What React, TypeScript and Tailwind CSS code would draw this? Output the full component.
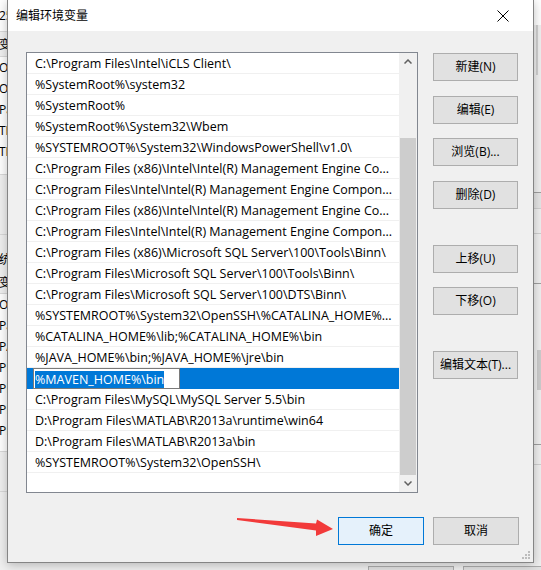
import React from 'react';

const paths = [
  'C:\\Program Files\\Intel\\iCLS Client\\',
  '%SystemRoot%\\system32',
  '%SystemRoot%',
  '%SystemRoot%\\System32\\Wbem',
  '%SYSTEMROOT%\\System32\\WindowsPowerShell\\v1.0\\',
  'C:\\Program Files (x86)\\Intel\\Intel(R) Management Engine Co...',
  'C:\\Program Files\\Intel\\Intel(R) Management Engine Compon...',
  'C:\\Program Files (x86)\\Intel\\Intel(R) Management Engine Co...',
  'C:\\Program Files\\Intel\\Intel(R) Management Engine Compon...',
  'C:\\Program Files (x86)\\Microsoft SQL Server\\100\\Tools\\Binn\\',
  'C:\\Program Files\\Microsoft SQL Server\\100\\Tools\\Binn\\',
  'C:\\Program Files\\Microsoft SQL Server\\100\\DTS\\Binn\\',
  '%SYSTEMROOT%\\System32\\OpenSSH\\%CATALINA_HOME%...',
  '%CATALINA_HOME%\\lib;%CATALINA_HOME%\\bin',
  '%JAVA_HOME%\\bin;%JAVA_HOME%\\jre\\bin',
  '%MAVEN_HOME%\\bin',
  'C:\\Program Files\\MySQL\\MySQL Server 5.5\\bin',
  'D:\\Program Files\\MATLAB\\R2013a\\runtime\\win64',
  'D:\\Program Files\\MATLAB\\R2013a\\bin',
  '%SYSTEMROOT%\\System32\\OpenSSH\\',
  '',
];

const SELECTED = 15;

const font = { fontFamily: '"Open Sans", "Noto Sans CJK SC", sans-serif' };

// 按钮
const Btn = ({ label, primary, className = '' }: { label: string; primary?: boolean; className?: string }) => (
  <div
    className={`h-[28px] flex items-center justify-center border text-[12px] text-black ${
      primary ? 'bg-[#e5f1fb] border-[#0078d7]' : 'bg-[#e1e1e1] border-[#adadad]'
    } ${className}`}
  >
    {label}
  </div>
);

const LeftStrip = () => {
  // 背景窗口露出的左边缘
  const top = ['O', 'O', 'Pa', 'TE', 'TM'];
  const bottom = ['O', 'Pa', 'PA', 'PR', 'PR', 'PR', 'PR'];
  return (
    <div className="w-[7px] h-full flex flex-col overflow-hidden text-[12px] leading-[21px] text-black">
      <div className="h-[32px] bg-white border-b border-[#d9d9d9] flex items-center -ml-[1px]">25</div>
      <div className="h-[24px] flex items-center -ml-[1px]">变</div>
      <div className="bg-white border-y border-[#d9d9d9] pb-[12px]">
        {top.map((t, i) => (
          <div key={i} className="h-[21px] -ml-[1px] whitespace-nowrap">{t}</div>
        ))}
      </div>
      <div className="h-[60px] border-b border-[#d9d9d9]" />
      <div className="h-[24px] mt-[12px] flex items-center -ml-[1px]">统</div>
      <div className="h-[22px] flex items-center -ml-[1px]">变</div>
      <div className="bg-white border-y border-[#d9d9d9] pb-[10px]">
        {bottom.map((t, i) => (
          <div key={i} className="h-[21px] -ml-[1px] whitespace-nowrap">{t}</div>
        ))}
      </div>
      <div className="h-[40px] border-b border-[#d9d9d9]" />
    </div>
  );
};

const RightStrip = () => (
  <div className="w-[7px] h-full flex flex-col overflow-hidden">
    <div className="h-[25px] bg-white" />
    <div className="h-[50px] ml-[2px] w-[2px] bg-[#d0d0d0]" />
    <div className="h-[118px] border-b border-[#a0a0a0]" />
    <div className="h-[16px] bg-[#e6e6e6] border-b border-[#d0d0d0]" />
    <div className="h-[25px] border-b border-[#d0d0d0]" />
    <div className="h-[50px] border-b border-[#a0a0a0]" />
    <div className="h-[66px]" />
    <div className="h-[40px] ml-[3px] bg-[#cdcdcd]" />
    <div className="h-[55px] border-b border-[#a0a0a0]" />
    <div className="h-[20px] border-b border-[#d0d0d0]" />
  </div>
);

export default function App() {
  return (
    <div className="relative w-[541px] h-[570px] overflow-hidden bg-[#f0f0f0]" style={font}>
      <div className="flex h-full">
        <LeftStrip />
        <div className="w-[527px]" />
        <RightStrip />
      </div>

      {/* 背景窗口的按钮边缘 */}
      <div className="absolute left-[368px] top-[566px] w-[86px] h-[28px] bg-[#e1e1e1] border border-[#adadad]" />
      <div className="absolute left-[463px] top-[566px] w-[86px] h-[28px] bg-[#e1e1e1] border border-[#adadad]" />

      {/* 对话框 */}
      <div className="absolute left-[7px] top-0 w-[527px] h-[563px] bg-[#f0f0f0] border-x border-b border-[#858585] shadow-[0_2px_10px_rgba(0,0,0,0.25)] flex flex-col">
        <div className="h-[31px] bg-white flex items-center justify-between shrink-0">
          <span className="pl-[8px] text-[12px] text-black">编辑环境变量</span>
          <svg width="12" height="12" viewBox="0 0 12 12" className="mr-[24px]">
            <path d="M0.5 0.5 L11.5 11.5 M11.5 0.5 L0.5 11.5" stroke="#000" strokeWidth="1" />
          </svg>
        </div>

        <div className="flex pt-[21px] pl-[18px]">
          {/* 列表 */}
          <div className="w-[392px] h-[441px] border border-[#828790] bg-white flex">
            <div className="w-[372px] flex flex-col overflow-hidden">
              {paths.map((p, i) =>
                i === SELECTED ? (
                  <div key={i} className="h-[21px] shrink-0 bg-[#0078d7] flex items-stretch pl-[6px]">
                    <div className="w-[147px] bg-white border border-[#7a7a7a] flex items-center pl-[1px] pt-[2px]">
                      <span className="bg-[#0078d7] text-white text-[12.5px] leading-[17px] whitespace-nowrap">{p}</span>
                    </div>
                  </div>
                ) : (
                  <div
                    key={i}
                    className="h-[21px] shrink-0 border-b border-[#f0f0f0] flex items-center pl-[8px] pt-[3px] text-[12.5px] text-black whitespace-nowrap overflow-hidden"
                  >
                    {p}
                  </div>
                ),
              )}
            </div>
            {/* 滚动条 */}
            <div className="w-[18px] bg-[#f0f0f0] flex flex-col">
              <div className="h-[17px] flex items-center justify-center">
                <svg width="8" height="5" viewBox="0 0 8 5">
                  <path d="M0.5 4.5 L4 1 L7.5 4.5" fill="none" stroke="#606060" strokeWidth="1.5" />
                </svg>
              </div>
              <div className="h-[68px]" />
              <div className="h-[337px] mx-[1px] bg-[#cdcdcd]" />
              <div className="flex-1 flex items-center justify-center">
                <svg width="8" height="5" viewBox="0 0 8 5">
                  <path d="M0.5 0.5 L4 4 L7.5 0.5" fill="none" stroke="#606060" strokeWidth="1.5" />
                </svg>
              </div>
            </div>
          </div>

          {/* 右侧按钮 */}
          <div className="ml-[15px] w-[85px] flex flex-col pt-[1px]">
            <Btn label="新建(N)" />
            <Btn label="编辑(E)" className="mt-[15px]" />
            <Btn label="浏览(B)..." className="mt-[14px]" />
            <Btn label="删除(D)" className="mt-[15px]" />
            <Btn label="上移(U)" className="mt-[36px]" />
            <Btn label="下移(O)" className="mt-[14px]" />
            <Btn label="编辑文本(T)..." className="mt-[36px]" />
          </div>
        </div>

        <div className="flex justify-end pr-[14px] pt-[24px] gap-[9px]">
          <Btn label="确定" primary className="w-[86px]" />
          <Btn label="取消" className="w-[86px]" />
        </div>

        {/* 调整大小手柄 */}
        <svg width="9" height="9" viewBox="0 0 9 9" className="absolute right-[3px] bottom-[3px]">
          {[
            [7, 1], [7, 4], [4, 4], [7, 7], [4, 7], [1, 7],
          ].map(([x, y], i) => (
            <rect key={i} x={x} y={y} width="2" height="2" fill="#bcbcbc" />
          ))}
        </svg>
      </div>

      {/* 红色箭头 */}
      <svg className="absolute left-0 top-0 pointer-events-none" width="541" height="570">
        <polygon
          points="237,518 316,523.5 317,519.5 333,529 316,536 316,530.5 237,520"
          fill="#f23a3a"
        />
      </svg>
    </div>
  );
}
